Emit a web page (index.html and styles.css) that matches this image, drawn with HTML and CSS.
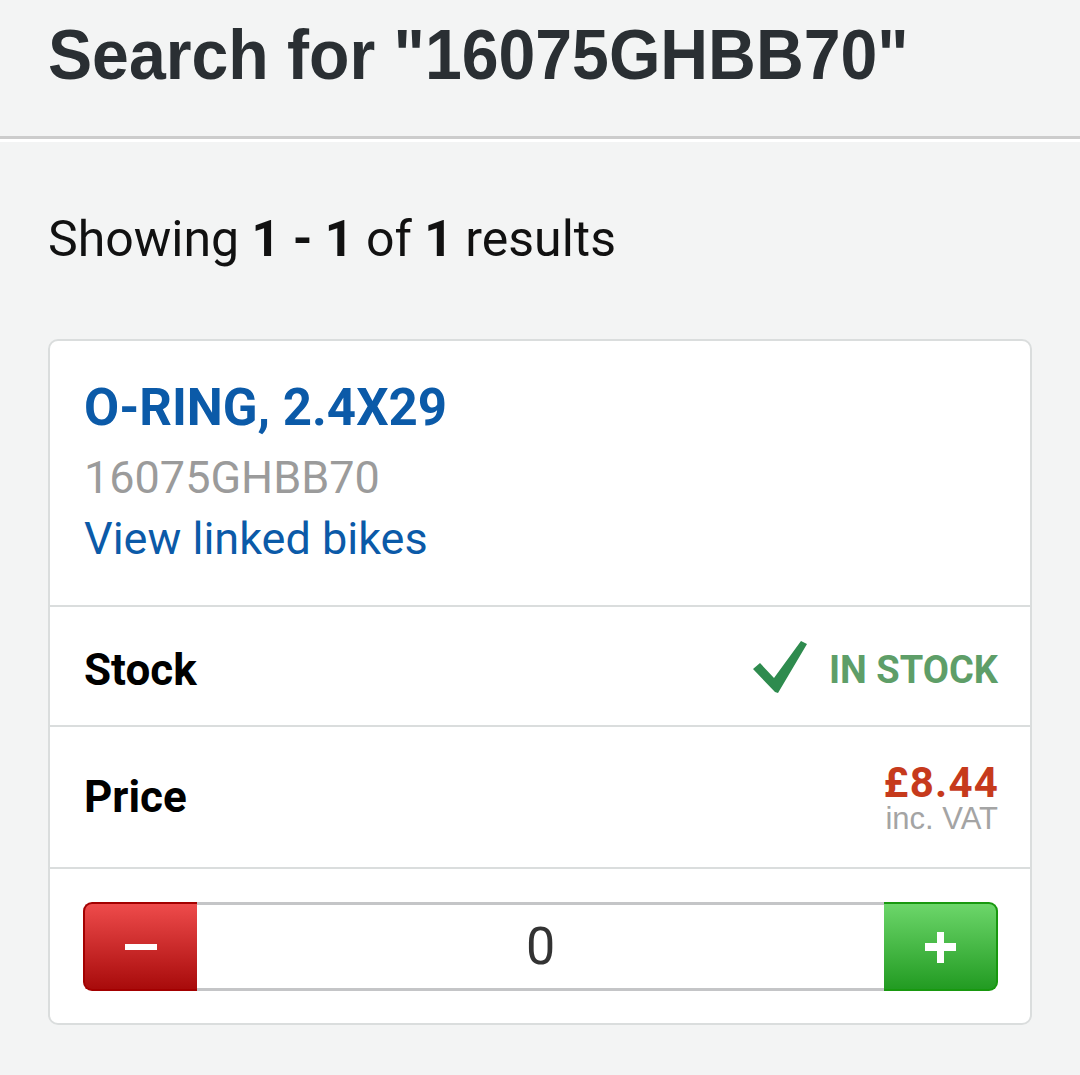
FILE: index.html
```html
<!DOCTYPE html>
<html lang="en">
<head>
<meta charset="utf-8">
<title>Search for "16075GHBB70"</title>
<link rel="stylesheet" href="styles.css">
</head>
<body>
<header class="page-header">
  <h1 class="page-title">Search for "16075GHBB70"</h1>
</header>
<main class="content">
  <p class="result-count">Showing <b>1 - 1</b> of <b>1</b> results</p>
  <article class="card">
    <div class="card-head">
      <a class="product-name" href="#">O-RING, 2.4X29</a>
      <div class="product-code">16075GHBB70</div>
      <a class="linked-bikes" href="#">View linked bikes</a>
    </div>
    <div class="card-row stock-row">
      <span class="row-label">Stock</span>
      <span class="stock-status">
        <svg class="check-icon" viewBox="0 0 54 54" width="54" height="54" aria-hidden="true">
          <path d="M0 29 L7 23 L21 38 L48 1 L54 4 L25 53 L22 52 Z" fill="#2e8b4e"/>
        </svg>
        <span class="stock-text">IN STOCK</span>
      </span>
    </div>
    <div class="card-row price-row">
      <span class="row-label">Price</span>
      <span class="price-box">
        <span class="price">£8.44</span>
        <span class="vat">inc. VAT</span>
      </span>
    </div>
    <div class="qty-row">
      <div class="qty">
        <button class="qty-btn minus" aria-label="Decrease"><span class="bar-h"></span></button>
        <div class="qty-value">0</div>
        <button class="qty-btn plus" aria-label="Increase"><span class="bar-h"></span><span class="bar-v"></span></button>
      </div>
    </div>
  </article>
</main>
</body>
</html>
```

FILE: styles.css
```css
html, body {
  margin: 0;
  padding: 0;
}
body {
  background: #f3f4f4;
  font-family: Roboto, "Noto Sans", sans-serif;
  color: #111;
}
.page-header {
  height: 139px;
  box-sizing: border-box;
  padding: 15px 48px 0;
  border-bottom: 3px solid #cccccc;
  box-shadow: 0 3px 0 #ffffff;
}
.page-title {
  margin: 0;
  font-family: "Liberation Sans Narrow", "Arial Narrow", "Liberation Sans", sans-serif;
  font-weight: 700;
  font-size: 70px;
  line-height: 1.15;
  color: #2a2f33;
  white-space: nowrap;
  transform: scaleX(0.945);
  transform-origin: left center;
}
.content {
  padding: 70px 48px 40px;
}
.result-count {
  margin: 0;
  font-size: 50px;
  line-height: 60px;
  color: #111;
}
.result-count b {
  font-weight: 700;
}
.card {
  margin-top: 70px;
  background: #fff;
  border: 2px solid #dadddd;
  border-radius: 10px;
}
.card-head {
  padding: 37px 34px 36px;
  border-bottom: 2px solid #dadddd;
  display: flex;
  flex-direction: column;
  align-items: flex-start;
}
.product-name {
  font-size: 51px;
  line-height: 60px;
  font-weight: 700;
  color: #0b5aa8;
  text-decoration: none;
  margin-bottom: 9px;
}
.product-code {
  font-size: 45px;
  line-height: 61px;
  color: #9b9b9b;
}
.linked-bikes {
  font-size: 45px;
  line-height: 61px;
  color: #0b5aa8;
  text-decoration: none;
}
.card-row {
  display: flex;
  justify-content: space-between;
  align-items: center;
  padding: 0 32px 0 34px;
  border-bottom: 2px solid #dadddd;
}
.stock-row {
  height: 120px;
  box-sizing: border-box;
  padding-top: 8px;
}
.price-row {
  height: 142px;
  box-sizing: border-box;
  padding-top: 0;
}
.row-label {
  font-size: 44px;
  font-weight: 700;
  color: #000;
}
.stock-status {
  display: flex;
  align-items: center;
  gap: 22px;
}
.check-icon {
  display: block;
  margin-top: -6px;
}
.stock-text {
  font-size: 38px;
  font-weight: 700;
  color: #5e9e68;
}
.price-box {
  display: flex;
  flex-direction: column;
  align-items: flex-end;
  padding-top: 2px;
}
.price {
  font-size: 42px;
  line-height: 40px;
  font-weight: 700;
  color: #c63a1c;
  letter-spacing: 1.2px;
  margin-right: -1px;
}
.vat {
  font-family: "Liberation Sans", Arial, sans-serif;
  font-size: 31px;
  line-height: 31px;
  color: #a4a4a4;
}
.qty-row {
  padding: 33px 32px 32px 33px;
}
.qty {
  display: flex;
  height: 89px;
}
.qty-btn {
  width: 114px;
  flex: none;
  position: relative;
  padding: 0;
  margin: 0;
  cursor: pointer;
  box-sizing: border-box;
}
.qty-btn.minus {
  background: linear-gradient(#ee4b4b, #a80b0b);
  border: 2px solid #a30000;
  border-right: none;
  border-radius: 9px 0 0 9px;
}
.qty-btn.plus {
  background: linear-gradient(#6cd66a, #229b22);
  border: 2px solid #18980f;
  border-left: none;
  border-radius: 0 9px 9px 0;
}
.bar-h {
  position: absolute;
  left: 50%;
  top: 50%;
  width: 32px;
  height: 6px;
  margin: -3px 0 0 -16px;
  background: #fff;
}
.plus .bar-h {
  width: 31px;
  height: 8px;
  margin: -4px 0 0 -15px;
}
.bar-v {
  position: absolute;
  left: 50%;
  top: 50%;
  width: 7px;
  height: 31px;
  margin: -15px 0 0 -3px;
  background: #fff;
}
.qty-value {
  flex: 1;
  display: flex;
  align-items: center;
  justify-content: center;
  border-top: 3px solid #c4c5c7;
  border-bottom: 3px solid #c4c5c7;
  font-size: 52px;
  color: #333;
  background: #fff;
}
```
